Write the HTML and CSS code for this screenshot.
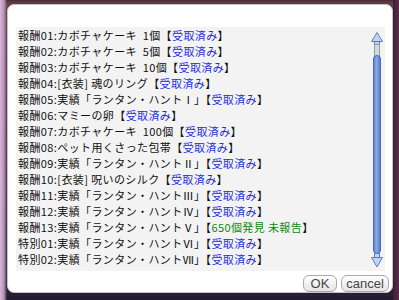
FILE: index.html
```html
<!DOCTYPE html>
<html lang="ja">

<head>
  <meta charset="UTF-8" />
  <title>報酬リスト</title>
  <link rel="stylesheet" href="styles.css">
</head>

<body>
  <div class="window">
    <div class="list-box">
      <ul class="rewards">
        <li>報酬01:カボチャケーキ&nbsp;&nbsp;1個【<span class="done">受取済み</span>】</li>
        <li>報酬02:カボチャケーキ&nbsp;&nbsp;5個【<span class="done">受取済み</span>】</li>
        <li>報酬03:カボチャケーキ&nbsp;&nbsp;10個【<span class="done">受取済み</span>】</li>
        <li>報酬04:[衣装] 魂のリング【<span class="done">受取済み</span>】</li>
        <li>報酬05:実績「ランタン・ハントⅠ」【<span class="done">受取済み</span>】</li>
        <li>報酬06:マミーの卵【<span class="done">受取済み</span>】</li>
        <li>報酬07:カボチャケーキ&nbsp;&nbsp;100個【<span class="done">受取済み</span>】</li>
        <li>報酬08:ペット用くさった包帯【<span class="done">受取済み</span>】</li>
        <li>報酬09:実績「ランタン・ハントⅡ」【<span class="done">受取済み</span>】</li>
        <li>報酬10:[衣装] 呪いのシルク【<span class="done">受取済み</span>】</li>
        <li>報酬11:実績「ランタン・ハントⅢ」【<span class="done">受取済み</span>】</li>
        <li>報酬12:実績「ランタン・ハントⅣ」【<span class="done">受取済み</span>】</li>
        <li>報酬13:実績「ランタン・ハントⅤ」【<span class="todo">650個発見 未報告</span>】</li>
        <li>特別01:実績「ランタン・ハントⅥ」【<span class="done">受取済み</span>】</li>
        <li>特別02:実績「ランタン・ハントⅦ」【<span class="done">受取済み</span>】</li>
      </ul>

      <!-- スクロールバー -->
      <svg class="scrollbar" width="12" height="236" viewBox="0 0 12 236">
        <defs>
          <linearGradient id="thumb" x1="0" x2="1" y1="0" y2="0">
            <stop offset="0" stop-color="#5b82d2" />
            <stop offset="0.45" stop-color="#8aa9e8" />
            <stop offset="1" stop-color="#5477c6" />
          </linearGradient>
        </defs>
        <polygon points="0.5,9.5 6,0.5 11.5,9.5" fill="#c3d2ef" stroke="#5c7cc2" />
        <rect x="3.5" y="9.5" width="5" height="3" fill="#c3d2ef" stroke="#5c7cc2" />
        <rect x="3.5" y="12.5" width="5" height="14" fill="#d3dbd8" stroke="#8d9ba8" />
        <rect x="2.5" y="23.5" width="7" height="198" rx="3.5" fill="url(#thumb)" stroke="#4a6cb8" />
        <rect x="3.5" y="221.5" width="5" height="4" fill="#c3d2ef" stroke="#5c7cc2" />
        <polygon points="0.5,225.5 11.5,225.5 6,235" fill="#c3d2ef" stroke="#5c7cc2" />
      </svg>
    </div>

    <div class="buttons">
      <button class="btn ok">OK</button>
      <button class="btn cancel">cancel</button>
    </div>
  </div>
</body>

</html>
```

FILE: styles.css
```css
body {
  margin: 0;
  height: 300px;
  overflow: hidden;
  font-family: "Noto Sans CJK JP", "Noto Sans", sans-serif;
  background:
    linear-gradient(to right, #d9b9d6 0, #b58fb8 4px, transparent 7px),
    linear-gradient(to left, #5a2c4a 0, #3e2034 6px, transparent 6px),
    linear-gradient(to bottom, #4a2a33 0, #6b4650 4px, #3a2a44 280px, #221a30 300px);
}

.window {
  display: flex;
  flex-direction: column;
  margin: 4px 6px 0 7px;
  padding: 22px 3px 0 8px;
  box-sizing: border-box;
  height: 289px;
  background-color: #ffffff;
  border: 1px solid #c4c4c4;
  border-radius: 7px;
  box-shadow: 0 0 2px rgba(0, 0, 0, 0.35);
}

.list-box {
  display: flex;
  height: 244px;
  margin-right: 4px;
  background-color: #f3f3f3;
}

.rewards {
  flex: 1;
  list-style: none;
  margin: 0;
  padding: 0 0 0 2px;
  font-size: 11px;
  line-height: 16px;
  letter-spacing: 0.4px;
  color: #111111;
  white-space: nowrap;
}

.done {
  color: #1f2fe0;
}

.todo {
  color: #108a10;
}

.scrollbar {
  display: block;
  margin: 5px 2px 0 0;
}

.buttons {
  display: flex;
  justify-content: flex-end;
  gap: 4px;
  margin-top: 4px;
}

.btn {
  height: 17px;
  padding: 0;
  font-family: "Liberation Sans", sans-serif;
  font-size: 13px;
  line-height: 15px;
  color: #444444;
  background: linear-gradient(to bottom, #ffffff, #e4e4e4);
  border: 1px solid #a8a8a8;
  border-radius: 6px;
}

.ok {
  width: 34px;
}

.cancel {
  width: 48px;
}
```
